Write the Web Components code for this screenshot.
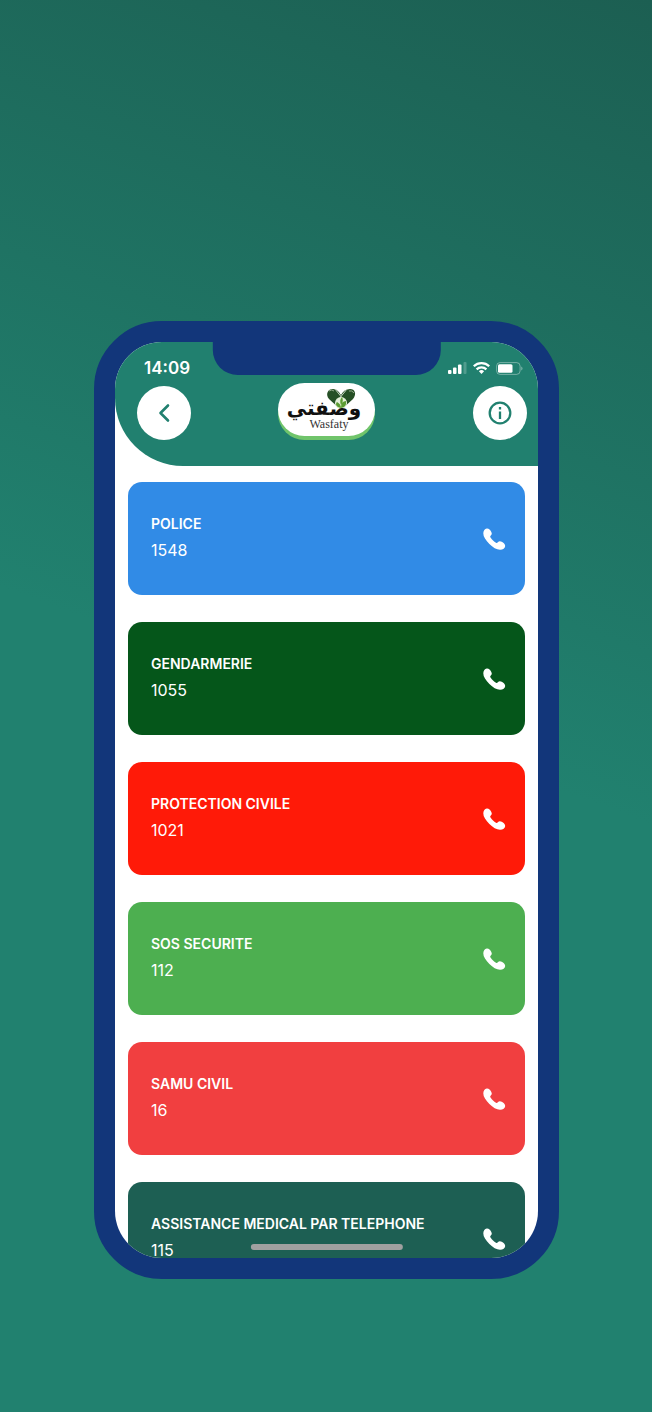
<!DOCTYPE html>
<html lang="fr">
<head>
<meta charset="utf-8">
<meta name="viewport" content="width=device-width, initial-scale=1">
<title>Wasfaty</title>
<style>
html { height: 100%; }
body { margin: 0; min-height: 100%; background: linear-gradient(200deg, #1c5f52, #21816f 50%); font-family: Inter, "Liberation Sans", sans-serif; }
</style>
</head>
<body>
<app-stage>
  <phone-frame>
    <app-header slot="top" time="14:09"></app-header>
    <call-list>
      <call-card label="POLICE" number="1548" style="--card:#318be6"></call-card>
      <call-card label="GENDARMERIE" number="1055" style="--card:#05561a"></call-card>
      <call-card label="PROTECTION CIVILE" number="1021" style="--card:#ff1a08"></call-card>
      <call-card label="SOS SECURITE" number="112" style="--card:#4daf50"></call-card>
      <call-card label="SAMU CIVIL" number="16" style="--card:#f13f40"></call-card>
      <call-card label="ASSISTANCE MEDICAL PAR TELEPHONE" number="115" style="--card:#1d5f53"></call-card>
    </call-list>
  </phone-frame>
</app-stage>
<script>
const define = (name, html, setup) => customElements.define(name, class extends HTMLElement {
  constructor() {
    super();
    this.attachShadow({ mode: 'open' }).innerHTML = html;
  }
  connectedCallback() { if (setup) setup(this, this.shadowRoot); }
});

define('app-stage', `
<style>
  :host { display: block; padding: 321px 93px 133px 94px; }
</style>
<slot></slot>`);

define('phone-frame', `
<style>
  :host { display: block; box-sizing: border-box; position: relative; aspect-ratio: 465 / 958; border: 21px solid #12367a; border-radius: 68px; background: #12367a; }
  .screen { height: 100%; overflow: hidden; border-radius: 47px; background: #fff; }
  .notch { position: absolute; top: -1px; left: 50%; width: 54%; height: 34px; transform: translateX(-50%); border-radius: 0 0 25px 25px; background: #12367a; }
  .home { position: absolute; bottom: 8px; left: 50%; width: 36%; height: 6px; transform: translateX(-50%); border-radius: 3px; background: #a0a0a0; }
</style>
<div class="screen"><slot name="top"></slot><slot></slot></div>
<div class="notch"></div>
<div class="home"></div>`);

define('status-icons', `
<style>
  :host { display: flex; align-items: center; gap: 6px; }
  svg { display: block; }
</style>
<svg width="19" height="12" viewBox="0 0 19 12" fill="#fff"><rect x="0" y="8" width="3.500" height="4" rx="1"/><rect x="5" y="5.500" width="3.500" height="6.500" rx="1"/><rect x="10" y="2.500" width="3.500" height="9.500" rx="1"/><rect x="15.500" y="0" width="3" height="12" rx="1" opacity=".22"/></svg>
<svg width="17" height="12" viewBox="0 0 17 12" fill="none" stroke="#fff" stroke-width="2.300"><path d="M.8 4.300a11 11 0 0 1 15.400 0M3.600 7.400a7 7 0 0 1 9.800 0"/><path d="M8.500 12l-2.600-2.700a3.700 3.700 0 0 1 5.200 0z" fill="#fff" stroke="none"/></svg>
<svg width="27" height="13" viewBox="0 0 27 13" fill="none"><rect x=".6" y=".6" width="23.500" height="11.800" rx="3.500" stroke="#fff" stroke-opacity=".38"/><rect x="2" y="2.300" width="14.500" height="8.400" rx="1.500" fill="#fff"/><path d="M25.300 4.500a2.300 2.300 0 0 1 0 4z" fill="#fff" opacity=".45"/></svg>`);

define('app-logo', `
<style>
  :host { display: block; }
  div { width: 97px; height: 53px; border-radius: 28px; background: #fff; box-shadow: 0 4px #70c46b; margin-bottom: 4px; }
  svg { display: block; }
  .ar { font: bold 20px "DejaVu Sans", sans-serif; }
  .la { font: 12px "Liberation Serif", serif; }
</style>
<div>
<svg width="97" height="53" viewBox="0 0 97 53">
  <path d="M63 27L51 16C47 11 50 6 55 6C59 6 61 9 63 12C65 8 68 6 72 6C77 6 79 11 75 16Z" fill="#254f25"/>
  <path d="M57 6L69 21M69 6L57 21" stroke="#c4d2be" stroke-width="1"/>
  <path d="M51 8Q54 6 56 8M71 8Q74 7 76 10" fill="none" stroke="#91aa89"/>
  <circle cx="63" cy="20" r="6" fill="#e3efd7"/>
  <path d="M63 25C58 24 57 21 59 19Q63 21 63 25Q69 24 68 18Q63 18 63 25M63 22Q61 17 64 14Q66 18 63 22" fill="#5b9c32"/>
  <text class="ar" x="46" y="32" text-anchor="middle" direction="rtl" fill="#101010">وصفتي</text>
  <text class="la" x="51" y="45" text-anchor="middle" fill="#333">Wasfaty</text>
</svg>
</div>`);

define('app-header', `
<style>
  :host { display: block; padding: 0 11px 26px; background: #21806f; border-bottom-left-radius: 68px; color: #fff; }
  .status { display: flex; align-items: center; justify-content: space-between; height: 30px; padding: 11px 4px 0 18px; font-size: 17px; font-weight: 600; }
  nav { display: grid; grid-template-columns: 1fr auto 1fr; align-items: end; }
  button { display: grid; place-items: center; width: 54px; height: 54px; padding: 0; border: 0; border-radius: 50%; background: #fff; color: #21806f; }
  .back { margin-left: 11px; }
  .info { justify-self: end; }
</style>
<div class="status"><time></time><status-icons></status-icons></div>
<nav>
  <button class="back" aria-label="Retour"><svg width="24" height="24" viewBox="0 0 24 24" fill="none" stroke="currentColor" stroke-width="2.600" stroke-linecap="round" stroke-linejoin="round"><path d="M16 4.500L8.500 12L16 19.500"/></svg></button>
  <app-logo></app-logo>
  <button class="info" aria-label="Informations"><svg width="24" height="24" viewBox="0 0 24 24" fill="none" stroke="currentColor" stroke-width="2.300"><circle cx="12" cy="12" r="10.300"/><path d="M12 10.500V18M12 6V8.400"/></svg></button>
</nav>`, (host, root) => { root.querySelector('time').textContent = host.getAttribute('time'); });

define('call-list', `
<style>
  :host { display: grid; gap: 27px; padding: 16px 13px; }
</style>
<slot></slot>`);

define('call-card', `
<style>
  :host { display: block; }
  a { display: flex; align-items: center; justify-content: space-between; box-sizing: border-box; min-height: 113px; padding: 0 19px 0 23px; border-radius: 14px; background: var(--card); color: #fff; text-decoration: none; }
  .text { display: grid; line-height: 26px; padding-bottom: 4px; }
  .label { font-size: 14px; font-weight: 600; }
  .number { font-size: 16px; }
  svg { flex: none; }
</style>
<a><span class="text"><span class="label"></span><span class="number"></span></span>
<svg width="24" height="24" viewBox="0 0 24 24" fill="#fff" aria-hidden="true"><path d="M1.300 6.300C1.400 3.900 2.800 1.900 4.700 1.600C6.800 1.300 8.200 3.100 9.300 4.900C10.300 6.500 9.700 7.700 8.400 8.900C8 9.500 8.200 10 8.700 10.700C10.100 12.700 11.900 14.400 14 15.700C14.700 16.100 15.100 16 15.600 15.500C16.800 14.200 18.100 13.900 19.700 14.800C21.400 15.800 23.300 17.200 23.200 19C23.100 21.300 20.700 22.900 18 22.800C14.600 22.700 10.800 20.400 7.400 17C3.900 13.500 1.200 9.800 1.300 6.300Z"/></svg></a>`, (host, root) => {
  const number = host.getAttribute('number');
  root.querySelector('a').href = 'tel:' + number;
  root.querySelector('.label').textContent = host.getAttribute('label');
  root.querySelector('.number').textContent = number;
});
</script>
</body>
</html>
